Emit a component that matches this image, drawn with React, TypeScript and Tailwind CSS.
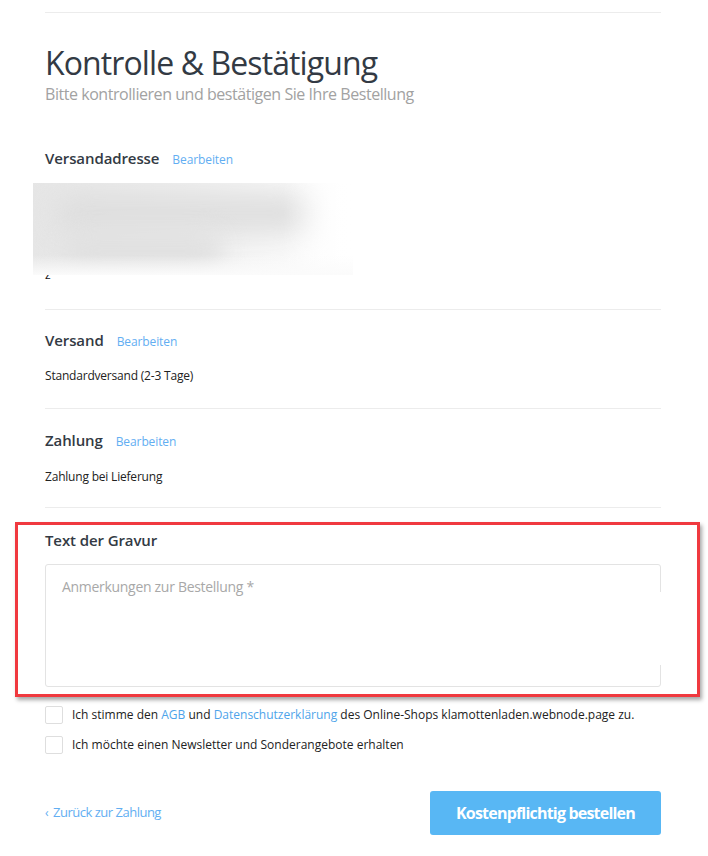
import React from 'react';

const font = { fontFamily: '"Open Sans", "Liberation Sans", sans-serif' };

const SectionHead = ({ title }: { title: string }) => (
  <div className="flex items-baseline gap-[13px]">
    <h3 className="text-[15px] font-semibold text-[#333a44] tracking-[-0.1px]">{title}</h3>
    <a className="text-[12px] text-[#62aef2] tracking-[-0.1px]">Bearbeiten</a>
  </div>
);

const Checkbox = () => (
  <span className="w-[18px] h-[18px] border border-[#dedede] rounded-[2px] bg-white shrink-0" />
);

export default function App() {
  return (
    <div className="relative w-[708px] h-[856px] bg-white overflow-hidden" style={font}>
      <div className="px-[45px] pr-[47px]">
        <div className="border-t border-[#ececec] mt-[12px]" />

        <h1 className="text-[32px] leading-[40px] text-[#333a44] mt-[30px] tracking-[-0.9px]">Kontrolle &amp; Bestätigung</h1>
        <p className="text-[16px] leading-[22px] text-[#a2a2a2] tracking-[-0.45px]">Bitte kontrollieren und bestätigen Sie Ihre Bestellung</p>

        <div className="mt-[42px]">
          <SectionHead title="Versandadresse" />
          <div className="relative z-10 mt-[13px] -ml-[12px] w-[320px] h-[92px] overflow-hidden bg-[#f3f3f3]">
            <div className="absolute inset-0 bg-gradient-to-r from-[#e6e6e6] via-[#f0f0f0] to-white" />
            <div className="absolute left-[20px] top-[10px] w-[260px] h-[40px] rounded-full bg-[#dedede] blur-[14px]" />
            <div className="absolute left-[30px] top-[50px] w-[160px] h-[36px] rounded-full bg-[#e0e0e0] blur-[12px]" />
            <div className="absolute right-0 top-0 w-[70px] h-full bg-gradient-to-r from-transparent to-white" />
            <div className="absolute left-0 right-0 bottom-0 h-[20px] bg-gradient-to-b from-transparent to-[#fbfbfb]" />
          </div>
          <p className="-mt-[6px] text-[12px] leading-[12px] text-[#111]">z</p>
        </div>

        <div className="border-t border-[#ececec] mt-[28px]" />

        <div className="pt-[19px]">
          <SectionHead title="Versand" />
          <p className="text-[12px] text-[#222] mt-[16px] tracking-[-0.2px]">Standardversand (2-3 Tage)</p>
        </div>

        <div className="border-t border-[#ececec] mt-[23px]" />

        <div className="pt-[20px]">
          <SectionHead title="Zahlung" />
          <p className="text-[12px] text-[#222] mt-[16px] tracking-[-0.2px]">Zahlung bei Lieferung</p>
        </div>

        <div className="border-t border-[#ececec] mt-[21px]" />

        <div className="pt-[21px]">
          <h3 className="text-[15px] font-semibold text-[#333a44] tracking-[-0.1px]">Text der Gravur</h3>
          <div className="relative mt-[13px] h-[123px] border border-[#e3e3e3] rounded-[3px] px-[16px] pt-[11px]">
            <p className="text-[14px] text-[#a8a8a8] tracking-[-0.3px]">Anmerkungen zur Bestellung *</p>
            <span className="absolute -right-px top-[27px] w-[2px] h-[73px] bg-white" />
          </div>
        </div>

        <div className="mt-[19px] flex flex-col gap-[12px]">
          <label className="flex items-center gap-[9px] text-[12px] text-[#222]">
            <Checkbox />
            <span>
              Ich stimme den <a className="text-[#4ea4ea]">AGB</a> und{' '}
              <a className="text-[#4ea4ea]">Datenschutzerklärung</a> des Online-Shops klamottenladen.webnode.page zu.
            </span>
          </label>
          <label className="flex items-center gap-[9px] text-[12px] text-[#222]">
            <Checkbox />
            <span>Ich möchte einen Newsletter und Sonderangebote erhalten</span>
          </label>
        </div>

        <div className="mt-[37px] flex items-center justify-between">
          <a className="text-[13px] text-[#62aef2] flex items-center gap-[5px] tracking-[-0.5px]">
            <span className="text-[12px]">‹</span>
            Zurück zur Zahlung
          </a>
          <button className="w-[231px] h-[44px] rounded-[3px] bg-[#58b7f4] text-white text-[16px] font-bold tracking-[-0.8px]">
            Kostenpflichtig bestellen
          </button>
        </div>
      </div>

      <div className="absolute left-[15px] top-[522px] w-[685px] h-[175px] border-[3px] border-[#f0393f] shadow-[2px_3px_4px_rgba(0,0,0,0.35)] pointer-events-none" />
    </div>
  );
}
